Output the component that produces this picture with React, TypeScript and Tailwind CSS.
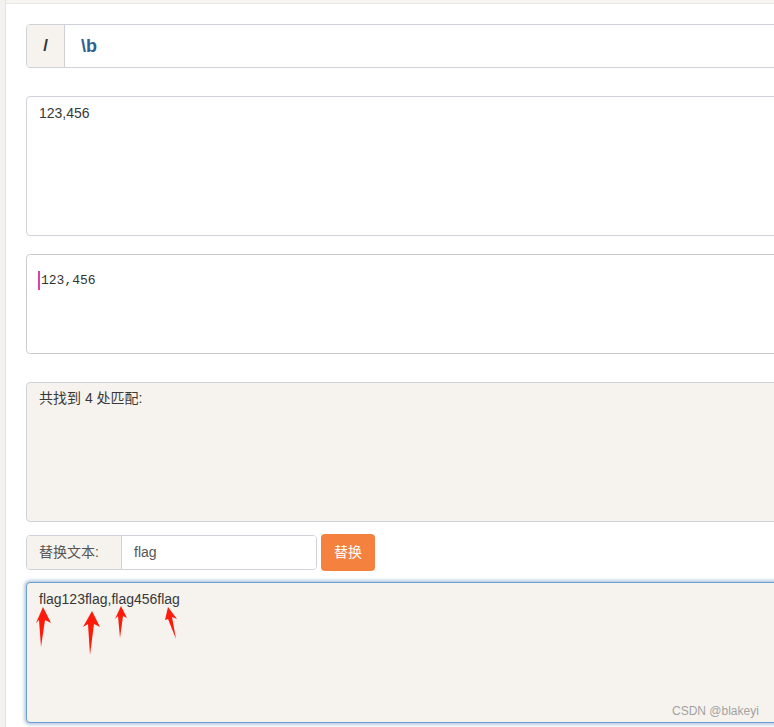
import React from "react";

export default function App() {
  return (
    <div className="relative w-[774px] h-[727px] overflow-hidden bg-white flex font-['Liberation_Sans','Noto_Sans_CJK_SC',sans-serif] text-[14px] text-[#383838]">
      <div className="w-[6px] shrink-0 bg-[#f4f2ee] border-r border-[#e6e2dc]" />
      <div className="flex-1 flex flex-col min-w-0">
        <div className="h-[4px] shrink-0 bg-[#f7f5f1] border-b border-[#ebe7e1]" />
        <div className="pl-[20px] flex flex-col w-[840px]">
          {/* regex input */}
          <div className="mt-[20px] h-[44px] flex border border-[#cfd3d9] rounded-[4px] overflow-hidden">
            <div className="w-[38px] shrink-0 bg-[#f6f3ee] border-r border-[#cfd3d9] flex items-center justify-center font-bold text-[17px] text-[#333]">
              /
            </div>
            <div className="flex-1 flex items-center pl-[16px] font-bold text-[18px] text-[#2e618d]">
              \b
            </div>
          </div>

          {/* source textarea */}
          <div className="mt-[28px] h-[140px] border border-[#cfd3d9] rounded-[4px] bg-white pl-[12px] pt-[6px] leading-[20px]">
            123,456
          </div>

          {/* highlight textarea */}
          <div className="mt-[18px] h-[100px] border border-[#cccccc] rounded-[4px] bg-white pl-[11px] pt-[16px] flex items-start">
            <span className="w-[2px] h-[19px] bg-[#e040a8] mr-[1px]" />
            <span className="font-['Liberation_Mono',monospace] text-[13px] leading-[19px] text-[#333]">123,456</span>
          </div>

          {/* result */}
          <div className="mt-[28px] h-[140px] border border-[#cfd3d9] rounded-[4px] bg-[#f6f3ee] pl-[12px] pt-[5px] leading-[20px]">
            共找到 4 处匹配:
          </div>

          {/* replace row */}
          <div className="mt-[12px] flex items-center">
            <div className="h-[35px] flex border border-[#cfd3d9] rounded-[4px] overflow-hidden">
              <div className="w-[95px] bg-[#f6f3ee] border-r border-[#cfd3d9] flex items-center pl-[12px] text-[#555]">
                替换文本:
              </div>
              <div className="w-[194px] bg-white flex items-center pl-[12px] text-[#555]">
                flag
              </div>
            </div>
            <button className="ml-[4px] w-[54px] h-[37px] rounded-[4px] bg-[#f5813e] text-white text-[14px] flex items-center justify-center">
              替换
            </button>
          </div>

          {/* output */}
          <div className="mt-[11px] h-[141px] border border-[#6b9fd2] rounded-[4px] bg-[#f6f3ee] pl-[12px] pt-[6px] leading-[20px] shadow-[0_0_3px_2px_rgba(160,185,215,0.7)]">
            flag123flag,flag456flag
          </div>
        </div>
      </div>

      {/* annotation arrows */}
      <svg className="absolute left-0 top-0 pointer-events-none" width="774" height="727" viewBox="0 0 774 727">
        <polygon points="43,607 51,623 45,620 41,647 39,620 36,623" fill="#ff1a0a" />
        <polygon points="92,611 100,627 94,624 90,655 88,624 83,627" fill="#ff1a0a" />
        <polygon points="121,606 127,618 123,616 120,638 118,616 115,619" fill="#ff1a0a" />
        <polygon points="168,607 177,619 172,617 176,639 168,619 165,620" fill="#ff1a0a" />
      </svg>

      {/* watermark */}
      <div className="absolute left-[672px] top-[703px] text-[12px] leading-[16px] text-[#a0a0a0] font-['Liberation_Sans',sans-serif] [text-shadow:0_0_1px_rgba(255,255,255,0.8)]">
        CSDN @blakeyi
      </div>
    </div>
  );
}
